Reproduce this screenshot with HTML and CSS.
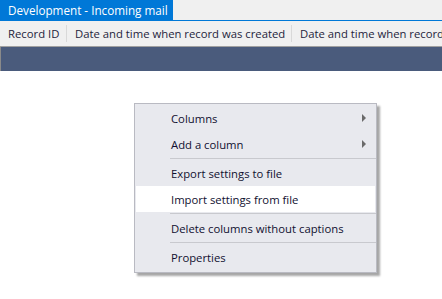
FILE: index.html
```html
<!DOCTYPE html>
<html lang="en">
<head>
  <meta charset="UTF-8" />
  <title>Development - Incoming mail</title>
  <link rel="stylesheet" href="styles.css">
</head>
<body>
  <div class="tabs">
    <div class="tab">Development - Incoming mail</div>
  </div>

  <div class="header">
    <div class="col col-id">Record ID</div>
    <div class="col col-date">Date and time when record was created</div>
    <div class="col col-date2">Date and time when record</div>
  </div>

  <div class="band"></div>

  <div class="grid">
    <div class="menu">
      <div class="item">Columns <span class="arrow"></span></div>
      <div class="item">Add a column <span class="arrow"></span></div>
      <div class="sep"></div>
      <div class="item">Export settings to file</div>
      <div class="item hover">Import settings from file</div>
      <div class="sep"></div>
      <div class="item">Delete columns without captions</div>
      <div class="sep"></div>
      <div class="item">Properties</div>
    </div>
  </div>
</body>
</html>
```

FILE: styles.css
```css
body {
  margin: 0;
  width: 442px;
  height: 299px;
  overflow: hidden;
  font-family: "Open Sans", "Noto Sans", sans-serif;
  font-size: 11.3px;
  background: #ffffff;
}

.tabs {
  height: 20px;
  background: #f0f0f0;
  border-bottom: 1px solid #0078d7;
}

.tab {
  width: 165px;
  height: 20px;
  padding-left: 8px;
  line-height: 20px;
  font-size: 11.7px;
  background: #0078d7;
  color: #ffffff;
}

.header {
  display: flex;
  height: 25px;
  background: #f0f0f0;
  border-bottom: 1px solid #a0a0a0;
  color: #1e1e3c;
  white-space: nowrap;
  overflow: hidden;
}

.col {
  line-height: 25px;
  padding-left: 8px;
  flex: none;
}

.col-id {
  width: 58px;
}

.col-date {
  width: 216px;
  border-left: 1px solid #d9d9d9;
  margin: 4px 0;
  line-height: 17px;
}

.col-date2 {
  border-left: 1px solid #d9d9d9;
  margin: 4px 0;
  line-height: 17px;
}

.band {
  height: 24px;
  background: #4a5b7c;
  border-left: 1px solid #8a8a8a;
}

.grid {
  padding: 32px 0 0 134px;
}

.menu {
  width: 241px;
  padding: 1px 0 2px;
  background: #e8e9ee;
  border: 1px solid #b9bac2;
  box-shadow: 3px 3px 2px rgba(0, 0, 0, 0.35);
  color: #101030;
}

.item {
  display: flex;
  align-items: center;
  height: 26px;
  padding-left: 35px;
  margin: 0 1px;
}

.item.hover {
  background: #ffffff;
}

.arrow {
  margin-left: auto;
  margin-right: 9px;
  width: 0;
  height: 0;
  border-top: 4px solid transparent;
  border-bottom: 4px solid transparent;
  border-left: 4px solid #6a6a6a;
}

.sep {
  height: 1px;
  margin: 1px 0 1px 35px;
  background: #c8c9ce;
}
```
